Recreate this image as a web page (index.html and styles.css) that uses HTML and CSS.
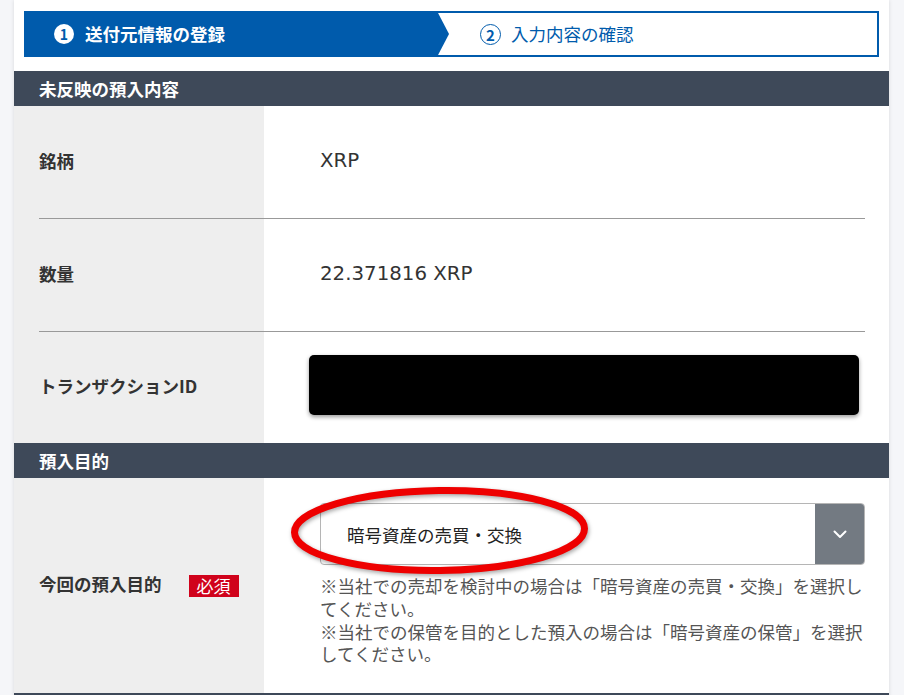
FILE: index.html
```html
<!DOCTYPE html>
<html lang="ja">
<head>
<meta charset="utf-8">
<title>預入内容</title>
<link rel="stylesheet" href="styles.css">
</head>
<body>
<div class="card">
  <div class="stepper">
    <div class="step step-active"><span class="num num-active">1</span><span class="step-label">送付元情報の登録</span></div>
    <div class="step step-next"><span class="num num-next">2</span><span class="step-label">入力内容の確認</span></div>
  </div>

  <div class="sec-head">未反映の預入内容</div>
  <div class="sec-body">
    <div class="row">
      <div class="label"><span class="label-text">銘柄</span></div>
      <div class="value"><span class="val-text">XRP</span></div>
    </div>
    <div class="row">
      <div class="label"><span class="label-text">数量</span></div>
      <div class="value"><span class="val-text">22.371816 XRP</span></div>
    </div>
    <div class="row row-last">
      <div class="label"><span class="label-text">トランザクションID</span></div>
      <div class="value value-tx"><div class="redacted"></div></div>
    </div>
  </div>

  <div class="sec-head">預入目的</div>
  <div class="sec-body">
    <div class="row row-form">
      <div class="label"><span class="label-text">今回の預入目的</span><span class="badge">必須</span></div>
      <div class="value value-form">
        <div class="select">
          <span class="select-text">暗号資産の売買・交換</span>
          <span class="select-btn">
            <svg width="14" height="9" viewBox="0 0 14 9"><path d="M1.5 1.5 L7 7 L12.5 1.5" fill="none" stroke="#fff" stroke-width="2" stroke-linecap="round" stroke-linejoin="round"/></svg>
          </span>
        </div>
        <p class="note">※当社での売却を検討中の場合は「暗号資産の売買・交換」を選択してください。<br>※当社での保管を目的とした預入の場合は「暗号資産の保管」を選択してください。</p>
        <svg class="circle-mark" width="312" height="102" viewBox="0 0 312 102">
          <ellipse cx="155.5" cy="50.5" rx="145" ry="40" fill="none" stroke="#ee0000" stroke-width="7" transform="rotate(-0.8 155.5 50.5)"/>
        </svg>
      </div>
    </div>
  </div>
  <div class="sec-head sec-next"></div>
</div>
</body>
</html>
```

FILE: styles.css
```css
html, body {
  margin: 0;
  padding: 0;
}
body {
  background: #f5f6f9;
  font-family: "Noto Sans CJK JP", "Noto Sans", sans-serif;
  color: #333;
  overflow: hidden;
}
.card {
  margin: 0 15px 0 14px;
  background: #fff;
  box-shadow: 0 0 4px rgba(0, 0, 0, 0.12);
  padding-top: 11px;
}
.stepper {
  display: flex;
  height: 46px;
  margin: 0 10px 14px 10px;
}
.step {
  display: flex;
  align-items: center;
  box-sizing: border-box;
  height: 46px;
  font-size: 17.5px;
}
.step-active {
  flex: 0 0 425px;
  background: #005bac;
  color: #fff;
  font-weight: bold;
  padding-left: 30px;
  clip-path: polygon(0 0, calc(100% - 12px) 0, 100% 50%, calc(100% - 12px) 100%, 0 100%);
  margin-right: -12px;
  position: relative;
  z-index: 1;
}
.step-next {
  flex: 1;
  border: 2px solid #005bac;
  border-left: none;
  color: #005bac;
  padding-left: 43px;
}
.num {
  display: inline-flex;
  align-items: center;
  justify-content: center;
  box-sizing: border-box;
  border-radius: 50%;
  font-size: 14px;
  font-weight: bold;
  line-height: 1;
}
.num-active {
  width: 20px;
  height: 20px;
  background: #fff;
  color: #005bac;
  margin-right: 11px;
}
.num-next {
  width: 21px;
  height: 21px;
  border: 1.5px solid #005bac;
  color: #005bac;
  margin-right: 10px;
  font-size: 15px;
}
.step-label {
  line-height: 1;
}
.sec-head {
  background: #3e4959;
  color: #fff;
  font-weight: bold;
  font-size: 17.5px;
  height: 35px;
  line-height: 35px;
  padding-left: 25px;
}
.sec-body {
  background: linear-gradient(to right, #eeeeee 250px, #ffffff 250px);
  padding: 0 24px 0 25px;
}
.row {
  display: flex;
  height: 112px;
  border-bottom: 1px solid #999;
}
.row-last {
  border-bottom: none;
  height: 111px;
}
.row-form {
  border-bottom: none;
  height: auto;
}
.label {
  flex: 0 0 225px;
  display: flex;
  align-items: center;
  font-size: 17.5px;
  font-weight: bold;
  color: #333;
}
.label-text {
  margin-top: -4px;
}
.value {
  flex: 1;
  display: flex;
  align-items: center;
  padding-left: 56px;
}
.val-text {
  font-family: "DejaVu Sans", "Noto Sans CJK JP", sans-serif;
  font-size: 19.8px;
  color: #333;
  margin-top: -3px;
}
.value-tx {
  padding-left: 45px;
  padding-right: 6px;
}
.redacted {
  flex: 1;
  height: 60px;
  background: #000;
  border-radius: 5px;
  box-shadow: 0 2px 4px rgba(0, 0, 0, 0.4);
  margin-top: -5px;
}
.badge {
  display: inline-block;
  background: #d0021b;
  color: #fff;
  font-weight: normal;
  font-size: 17px;
  line-height: 22px;
  padding: 0 8px;
  margin-left: 27px;
}
.value-form {
  flex-direction: column;
  align-items: stretch;
  padding-top: 25px;
  padding-bottom: 27px;
  position: relative;
}
.select {
  display: flex;
  height: 62px;
  box-sizing: border-box;
  border: 1px solid #b5b5b5;
  border-radius: 4px;
  overflow: hidden;
}
.select-text {
  flex: 1;
  display: flex;
  align-items: center;
  padding-left: 26px;
  font-size: 17.5px;
  color: #222;
}
.select-btn {
  flex: 0 0 50px;
  background: #737a82;
  display: flex;
  align-items: center;
  justify-content: center;
  margin: -1px -1px -1px 0;
}
.note {
  margin: 10px -4px 0 0;
  font-size: 17.5px;
  line-height: 22.75px;
  color: #555;
}
.circle-mark {
  position: absolute;
  left: 20px;
  top: 2px;
  filter: drop-shadow(1px 2px 2px rgba(0, 0, 0, 0.35));
}
.sec-next {
  height: 35px;
}
```
